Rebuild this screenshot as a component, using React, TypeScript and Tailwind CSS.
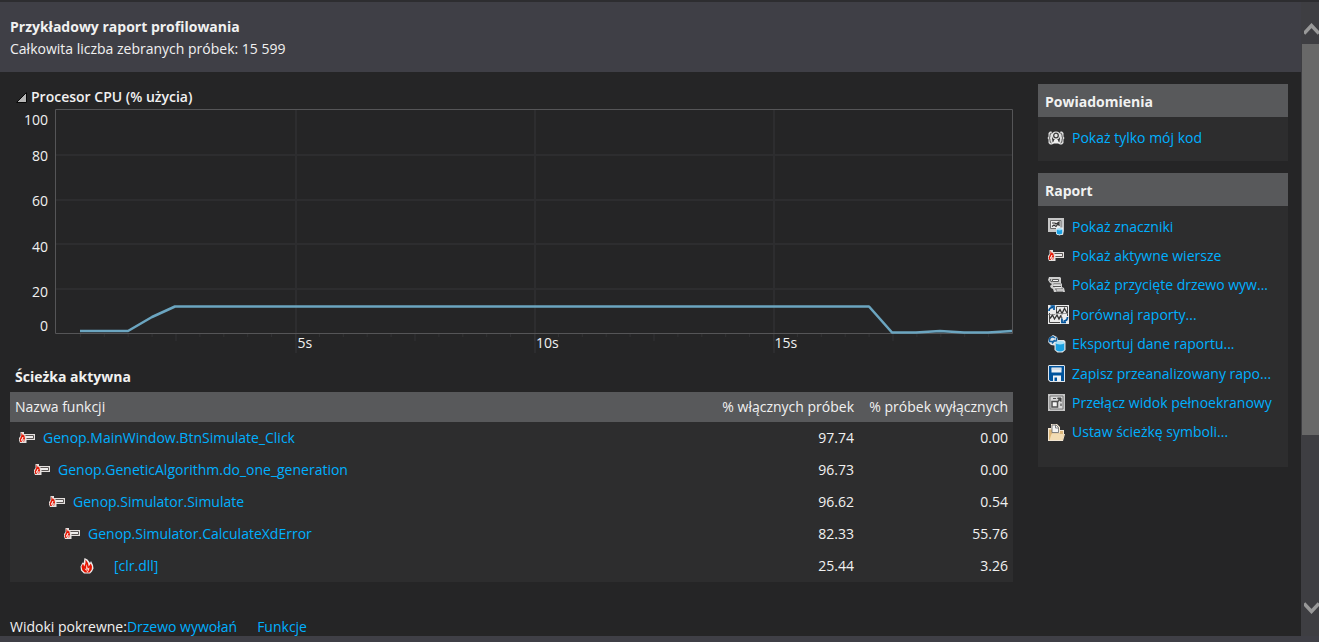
import React from "react";

function HotLineIcon() {
  return (
    <svg width="16" height="12" viewBox="0 0 16 12" className="shrink-0" aria-hidden="true">
      <path d="M1.500 0h3.500v2h11v6H7.500v3H1L0 8.500V6l1.500-2z" fill="#e4e0de" />
      <path d="M2.500 .5 4 3.500 5 2.500 6 6.500 5 10H4l.5-3-2 3H1.300L.7 7.500 2.300 4z" fill="#e51400" />
      <path d="M4 5 2.200 8.200 3 8.500zM5 7l-.8 3" fill="#fff" stroke="#fff" strokeWidth=".6" />
      <path d="M6.500 3.500h8v3h-7" fill="none" stroke="#5c5655" />
      <path d="M7 5h7" stroke="#f5f5f5" />
    </svg>
  );
}

function FlameIcon() {
  return (
    <svg width="14" height="16" viewBox="0 0 14 16" className="shrink-0" aria-hidden="true">
      <path d="M4.500 0l3 1.500 1.500 2 1 1.500 1-2 2 4 .5 3.500-1.500 3-2 2h-6l-3-3-.5-4 2-4 1.200.5z" fill="#eeebea" />
      <path d="M5.500 1.500 8 5l.7 3.500L10.800 5.500 12 8.500l-.3 3-2.200 3H4.800L2.300 12 1.500 8.500 3 5.500 4.300 8.500 5.500 5z" fill="#e51400" />
      <path d="M6.500 6 7.800 10.500 9.500 9.500 9 12l-1.500 2.500L6 12.500l-1.500-2 1.500.5z" fill="#fbdcd7" />
      <path d="M6.800 10l1 2.500-1.300 1.500z" fill="#e51400" />
    </svg>
  );
}

function MyCodeIcon() {
  return (
    <svg width="18" height="16" viewBox="0 0 18 16" className="shrink-0" aria-hidden="true">
      <path d="M4.500 1.500H3L1.500 3v3.500L.5 8l1 1.500V13L3 14.500h2L5.500 12 5 8l1-4zM13.500 1.500H15L16.500 3v3.500l1 1.500-1 1.500V13L15 14.500h-2l-.5-2.500.5-4-1-4z" fill="#dedede" />
      <path d="M4.800 3Q3 3 3 5.500T2 8q1 0 1 2.500T4.500 13M13.200 3Q15 3 15 5.500T16 8q-1 0-1 2.500T13.500 13" fill="none" stroke="#555" />
      <circle cx="9" cy="5.500" r="4" fill="#e6e6e6" />
      <circle cx="9" cy="5.500" r="2.300" fill="#e6e6e6" stroke="#3a3a3a" strokeWidth="1.300" />
      <path d="M4.800 14.500 5.500 11 8 9h2l2.500 2 .7 3.500-2.200-1h-4z" fill="#eee" />
      <path d="M5.800 12 7 9.500M12.200 12 11 9.500" stroke="#444" />
    </svg>
  );
}

function MarksIcon() {
  return (
    <svg width="16" height="18" viewBox="0 0 16 18" className="shrink-0" aria-hidden="true">
      <path d="M0 0h16v13l-1 4h-6l-1-3H0z" fill="#c6c6c6" />
      <path d="M2.500 2.500h10.500v8H2.500z" fill="#ededed" stroke="#6a6a6a" />
      <path d="M4 5h3l1 1 3-2v3M4 8.500 6 7l2 1.500L10 6l1.500 2" fill="none" stroke="#333" strokeWidth="1.200" />
      <path d="M8 9.500h7v6.500l-3.500 1.500L8 16z" fill="#e8eef2" />
      <path d="M8.700 11.500V15.500q2.800 1.800 5.600 0v-4z" fill="#1ba1e2" />
      <ellipse cx="11.500" cy="11.300" rx="2.700" ry="1.100" fill="#9bdcf8" />
    </svg>
  );
}

function CallTreeIcon() {
  return (
    <svg width="17" height="16" viewBox="0 0 17 16" className="shrink-0" aria-hidden="true">
      <path d="M1 0h11l1 1v5l1 1v3l2 1 1 4H6l-1-3-2-1-1-2 2-2-2-1L0 3z" fill="#cecece" />
      <path d="M4.500 2.500h6v2h-6zM3 2 2 3.500l2 1.500M5.500 7h7M5 9.500h8M7 12h8M8 14h7" fill="none" stroke="#555" />
      <path d="M5 3.500h5M6 8h6M7 10.700h6M9 13h6" stroke="#f5f5f5" />
    </svg>
  );
}

function CompareIcon() {
  return (
    <svg width="21" height="19" viewBox="0 0 21 19" className="shrink-0" aria-hidden="true">
      <path d="M0 0h21v19H0z" fill="#ececec" />
      <path d="M8.500 7V1.500H19.500V11M1.500 8V17.500H12" fill="none" stroke="#4a4a4a" />
      <path d="M8 7.500h2l2-3 2 4 2.500-5L19 8" fill="none" stroke="#333" strokeWidth="1.300" />
      <path d="M2 13.500 4.500 10 6.500 14 9 10l2 4 1.500-3 1.500 2" fill="none" stroke="#333" strokeWidth="1.300" />
      <path d="M0 9.500h7l1-1h12M13.500 10v8" fill="none" stroke="#777" strokeWidth=".7" />
      <path d="M1 6q0-3.500 4-3.500M2.500 1H6v4" fill="none" stroke="#00539c" strokeWidth="1.700" />
      <path d="M19.500 12q0 4-4 4M14 13.500V17.500h4" fill="none" stroke="#00539c" strokeWidth="1.700" />
    </svg>
  );
}

function ExportIcon() {
  return (
    <svg width="18" height="18" viewBox="0 0 18 18" className="shrink-0" aria-hidden="true">
      <path d="M1 3l4-3 4 2 1 3h6l1.500 1.500V15l-3 2.500h-5L6.500 15v-4.500L3 10 0 7z" fill="#e1e6ea" />
      <path d="M1.500 6Q1.500 2 5 1.800L7 3M1.500 3v3.500H5M8.500 2.500v3.500H5M7 5 4 8.500" fill="none" stroke="#1464a5" strokeWidth="1.400" />
      <path d="M7.700 8v7q4.300 3 8.600 0V8z" fill="#1ba1e2" />
      <ellipse cx="12" cy="7.800" rx="4.300" ry="1.700" fill="#a5e0f8" />
    </svg>
  );
}

function SaveIcon() {
  return (
    <svg width="17" height="17" viewBox="0 0 17 17" className="shrink-0" aria-hidden="true">
      <path d="M1 0h15l1 1v16H2l-2-2V1z" fill="#dce4ec" />
      <path d="M1 1h15v15H2.500L1 14.500z" fill="#00539c" />
      <path d="M3.500 2.500h10v5h-10zM5 10.500h8V16H5z" fill="#eef1f4" />
      <path d="M6.500 12.500H9V16H6.500z" fill="#00539c" />
      <path d="M3.500 4h10" stroke="#bdcfe0" />
    </svg>
  );
}

function FullScreenIcon() {
  return (
    <svg width="17" height="17" viewBox="0 0 17 17" className="shrink-0" aria-hidden="true">
      <path d="M0 0h17v17H0z" fill="#c6c6c6" />
      <path d="M2 2h13v13H2z" fill="#d9d9d9" stroke="#777" />
      <path d="M4 7.500h5.500V13H4z" fill="#f5f5f5" stroke="#505050" strokeWidth="1.500" />
      <path d="M9.500 4H13v3.500z" fill="#444" stroke="#444" />
      <path d="M5 4.500h3M13 9.500V12M9 8.500 12 5" fill="none" stroke="#505050" strokeWidth="1.200" />
    </svg>
  );
}

function SymbolPathIcon() {
  return (
    <svg width="17" height="17" viewBox="0 0 17 17" className="shrink-0" aria-hidden="true">
      <path d="M0 4h3V0h6l3 3v3h4v4h1l-2 7H0z" fill="#f3e7d4" />
      <path d="M1 5.500h3v4h8V7h3v3h1l-1.500 6H1z" fill="#dcb679" />
      <path d="M4 1h4L10.500 3.500V8.500H4z" fill="#f5f5f5" stroke="#666" strokeWidth=".8" />
      <path d="M7.500 1v3h3" fill="none" stroke="#666" strokeWidth=".8" />
      <path d="M3.500 10H16L14.500 16H1.500z" fill="#f2dcb4" />
    </svg>
  );
}

const rows = [
  { name: "Genop.MainWindow.BtnSimulate_Click", incl: "97.74", excl: "0.00", indent: "pl-[9px]" },
  { name: "Genop.GeneticAlgorithm.do_one_generation", incl: "96.73", excl: "0.00", indent: "pl-6" },
  { name: "Genop.Simulator.Simulate", incl: "96.62", excl: "0.54", indent: "pl-[39px]" },
  { name: "Genop.Simulator.CalculateXdError", incl: "82.33", excl: "55.76", indent: "pl-[54px]" },
  { name: "[clr.dll]", incl: "25.44", excl: "3.26", indent: "pl-[70px]", leaf: true },
];

const reportLinks = [
  { text: "Pokaż znaczniki", Icon: MarksIcon },
  { text: "Pokaż aktywne wiersze", Icon: HotLineIcon },
  { text: "Pokaż przycięte drzewo wyw...", Icon: CallTreeIcon },
  { text: "Porównaj raporty...", Icon: CompareIcon },
  { text: "Eksportuj dane raportu...", Icon: ExportIcon },
  { text: "Zapisz przeanalizowany rapo...", Icon: SaveIcon },
  { text: "Przełącz widok pełnoekranowy", Icon: FullScreenIcon },
  { text: "Ustaw ścieżkę symboli...", Icon: SymbolPathIcon },
];

const linkClass = "whitespace-nowrap text-[#00b0ff] hover:underline";

function UsageChart() {
  const ticks = Array.from({ length: 39 }, (_, i) => i + 1);
  return (
    <div className="flex">
      <div className="flex h-[226px] w-[45px] shrink-0 flex-col justify-between pr-[7px] text-right leading-[22px]">
        <span>100</span>
        <span className="-mt-[10px]">80</span>
        <span>60</span>
        <span>40</span>
        <span>20</span>
        <span className="-mt-[10px] leading-[18px]">0</span>
      </div>
      <div className="min-w-0 flex-1">
        <svg className="block h-[244px] w-full" viewBox="0 0 958 244" preserveAspectRatio="none" role="img" aria-label="Procesor CPU (% użycia)">
          <g stroke="#2d2d2f" strokeWidth="2">
            {[46, 91, 135, 180].map((y) => (
              <path key={y} d={`M1 ${y}H957`} />
            ))}
            {[241, 480, 719].map((x) => (
              <path key={x} d={`M${x} 1V244`} />
            ))}
          </g>
          <g stroke="#323234">
            {ticks.map((t) => (
              <path key={t} d={`M${1.5 + t * 23.9} 225v${t % 5 === 0 ? 7 : 3}`} />
            ))}
          </g>
          <path d="M.5 .5H957.500V224.500H.5Z" fill="none" stroke="#555557" />
          <path
            d="M25 222H73L97 208L120 197.500H814L837 223.500H861L885 222L909 223.500H933L957 222"
            fill="none"
            stroke="#6ba5c0"
            strokeWidth="2.600"
            strokeLinejoin="round"
          />
        </svg>
        <div className="-mt-5 grid grid-cols-4 pl-1 leading-5">
          <span />
          <span>5s</span>
          <span>10s</span>
          <span>15s</span>
        </div>
      </div>
    </div>
  );
}

export default function App() {
  return (
    <div className="flex h-screen flex-col overflow-hidden border-t-2 border-[#2d2d30] bg-[#252526] font-['Open_Sans','Noto_Sans',sans-serif] text-[14px] leading-5 text-[#f1f1f1]">
      <div className="flex min-h-0 flex-1">
        <div className="flex min-w-0 flex-1 flex-col">
          <header className="h-[70px] shrink-0 bg-[#3f3f46] px-[10px] pt-[14px] leading-[22px]">
            <h1 className="font-bold">Przykładowy raport profilowania</h1>
            <p>Całkowita liczba zebranych próbek: 15 599</p>
          </header>
          <div className="flex min-h-0 flex-1">
            <main className="flex min-w-0 flex-1 flex-col pl-[10px] pt-[15px]">
              <section>
                <h2 className="flex items-center gap-1 pb-0.5 pl-[6px] font-semibold">
                  <svg width="11" height="11" viewBox="0 0 11 11" aria-hidden="true">
                    <path d="M10.500 .5V10.500H.5Z" fill="#b5b5b5" stroke="#080808" />
                  </svg>
                  Procesor CPU (% użycia)
                </h2>
                <UsageChart />
              </section>
              <h2 className="pl-[5px] pt-[14px] font-bold leading-5">Ścieżka aktywna</h2>
              <table className="mt-[5px] w-full table-fixed border-collapse bg-[#2d2d2e]">
                <thead className="bg-[#58595b]">
                  <tr className="h-[30px]">
                    <th className="pl-[5px] text-left font-normal">Nazwa funkcji</th>
                    <th className="w-[156px] whitespace-nowrap pr-[5px] text-right font-normal">% włącznych próbek</th>
                    <th className="w-[154px] whitespace-nowrap pr-[5px] text-right font-normal">% próbek wyłącznych</th>
                  </tr>
                </thead>
                <tbody>
                  {rows.map((r) => (
                    <tr key={r.name} className="h-8">
                      <td className={r.indent}>
                        <div className={r.leaf ? "flex items-center gap-5" : "flex items-center gap-2"}>
                          {r.leaf ? <FlameIcon /> : <HotLineIcon />}
                          <a href="#function" className={linkClass}>{r.name}</a>
                        </div>
                      </td>
                      <td className="pr-[5px] text-right">{r.incl}</td>
                      <td className="pr-[5px] text-right">{r.excl}</td>
                    </tr>
                  ))}
                </tbody>
              </table>
              <nav className="mt-auto flex leading-[18px]">
                <span>Widoki pokrewne:</span>
                <a href="#tree" className={linkClass}>Drzewo wywołań</a>
                <a href="#functions" className={`${linkClass} ml-5`}>Funkcje</a>
              </nav>
            </main>
            <aside className="ml-[25px] mr-[13px] mt-3 flex w-[250px] shrink-0 flex-col gap-3">
              <section className="bg-[#2d2d2e] pb-3">
                <h2 className="h-[33px] bg-[#58595b] pl-[7px] font-bold leading-9">Powiadomienia</h2>
                <div className="flex h-8 items-center pl-[9px] pt-[10px]">
                  <span className="w-[25px]"><MyCodeIcon /></span>
                  <a href="#my-code" className={linkClass}>Pokaż tylko mój kod</a>
                </div>
              </section>
              <section className="bg-[#2d2d2e] pb-5">
                <h2 className="h-[33px] bg-[#58595b] pl-[7px] font-bold leading-9">Raport</h2>
                <ul className="grid h-[241px] auto-rows-fr pl-[10px] pt-[6px]">
                  {reportLinks.map(({ text, Icon }) => (
                    <li key={text} className="flex items-center">
                      <span className="w-6 shrink-0"><Icon /></span>
                      <a href="#report" className={linkClass}>{text}</a>
                    </li>
                  ))}
                </ul>
              </section>
            </aside>
          </div>
        </div>
        <div className="flex w-[18px] shrink-0 flex-col bg-[#3e3e42]">
          <button aria-label="Przewiń w górę" className="flex h-[42px] items-center justify-end pt-3">
            <svg width="15" height="12" viewBox="0 0 15 12" aria-hidden="true"><path d="M0 10.500 7.500 2.500 15 10.500" fill="none" stroke="#999" strokeWidth="3.500" /></svg>
          </button>
          <div className="ml-px min-h-0 flex-[391] bg-[#686868]" />
          <div className="flex-[167]" />
          <button aria-label="Przewiń w dół" className="flex h-[34px] justify-end">
            <svg width="15" height="12" viewBox="0 0 15 12" aria-hidden="true"><path d="M0 1.500 7.500 9.500 15 1.500" fill="none" stroke="#999" strokeWidth="3.500" /></svg>
          </button>
        </div>
      </div>
      <div className="h-[6px] shrink-0 bg-[#3f3f46]" />
    </div>
  );
}
